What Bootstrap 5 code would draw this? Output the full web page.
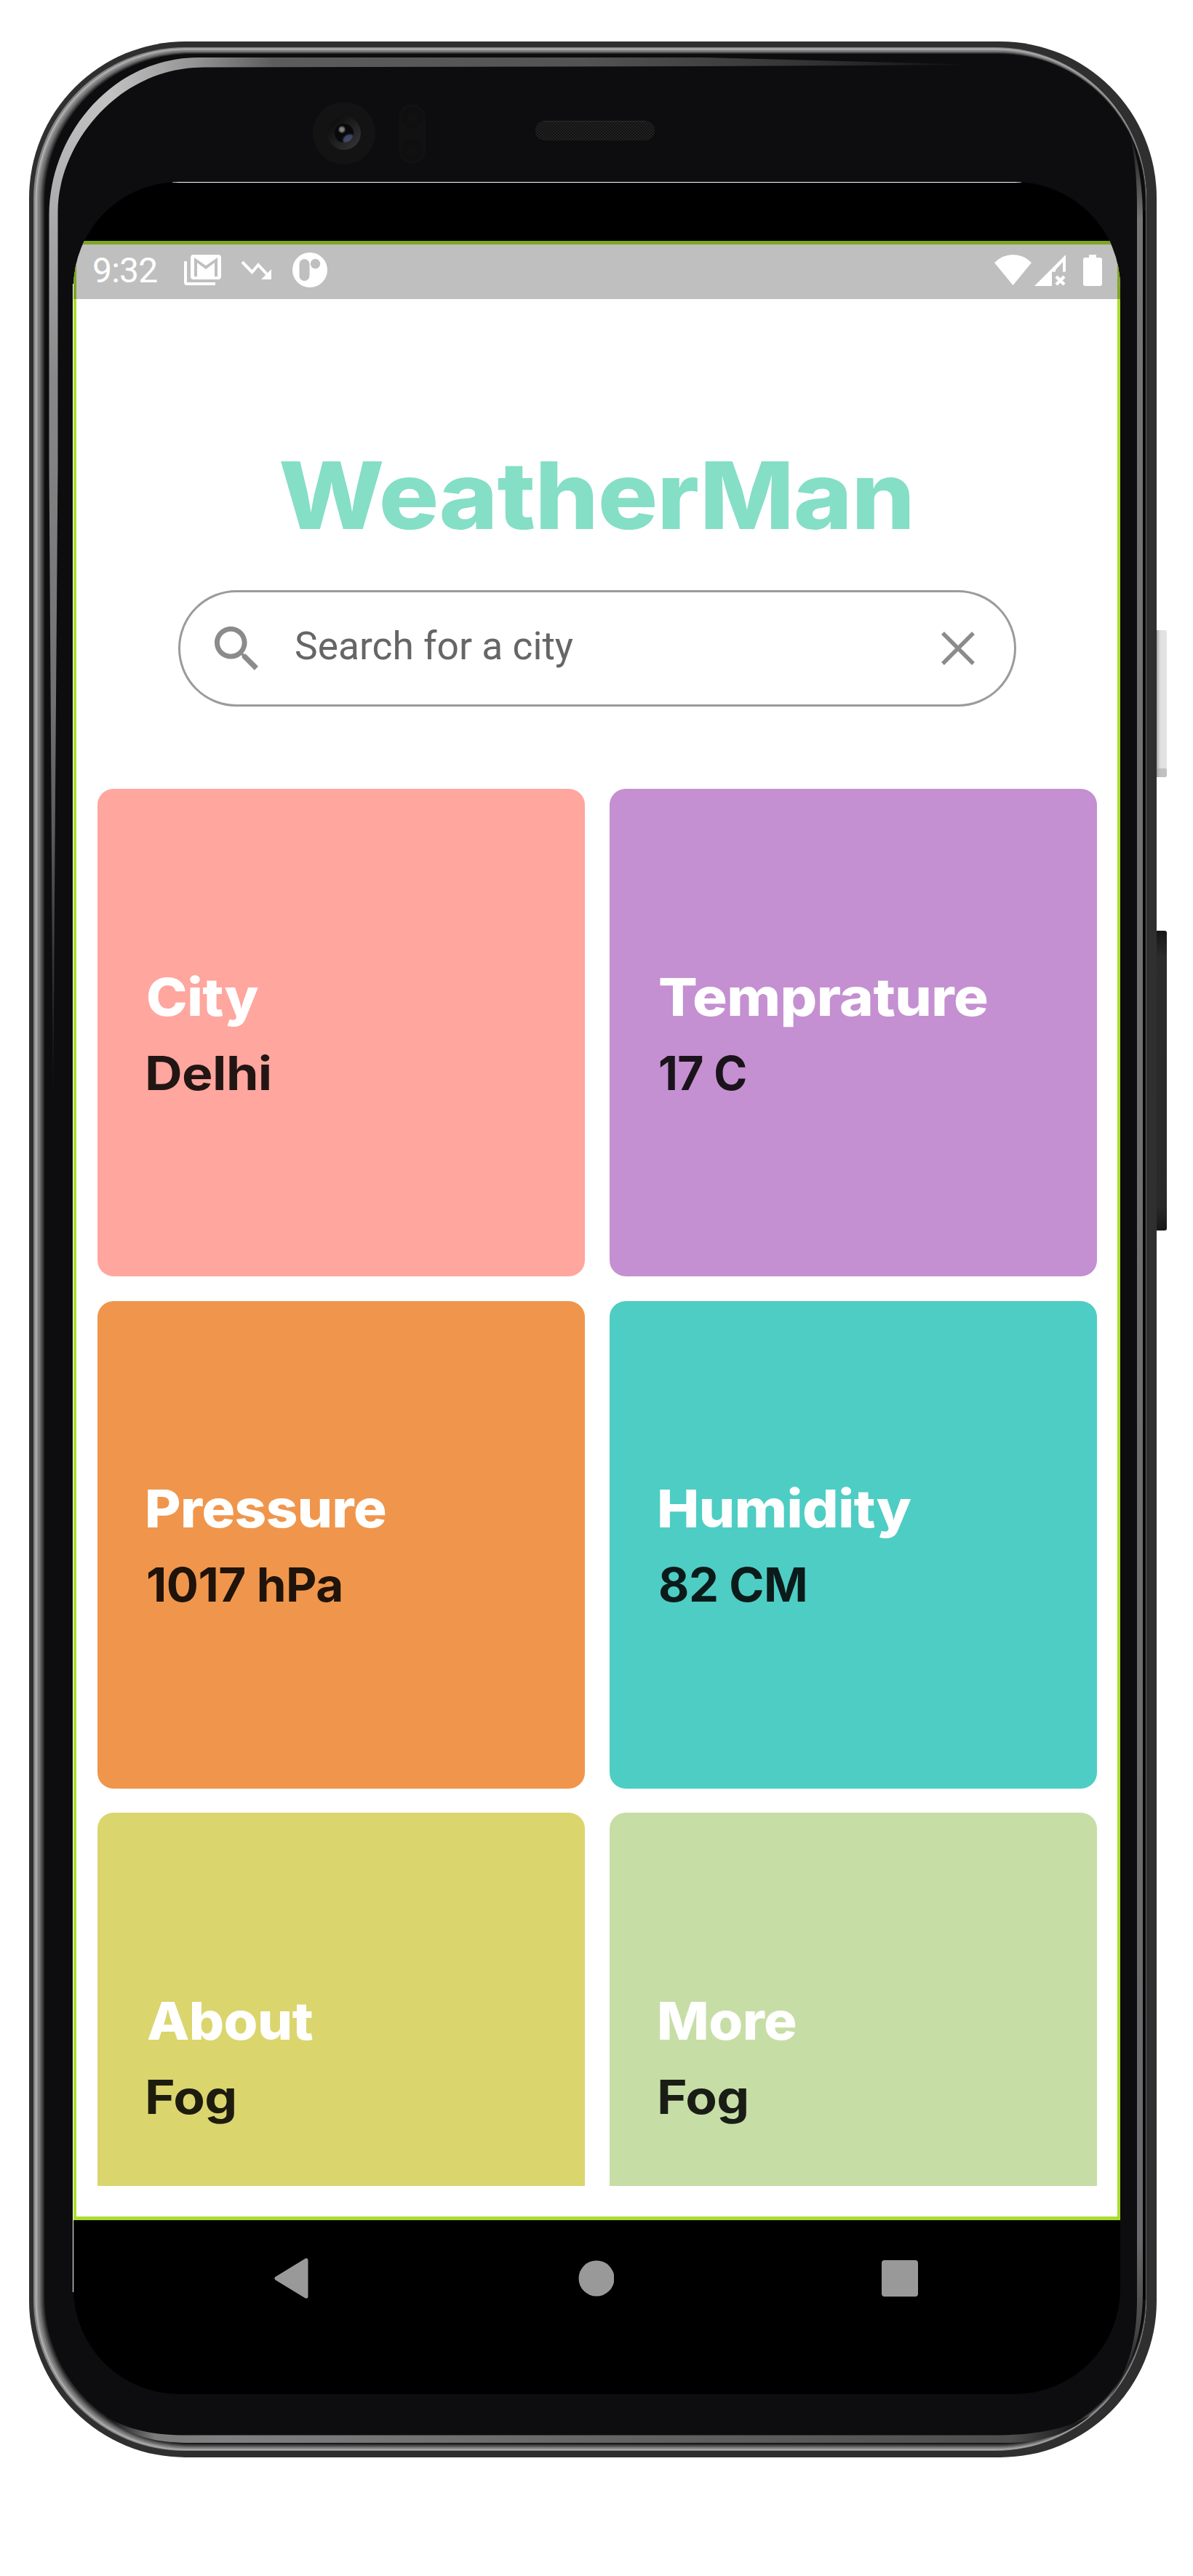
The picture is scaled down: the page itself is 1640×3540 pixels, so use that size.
<!DOCTYPE html>
<html lang="en">
<head>
<meta charset="utf-8">
<meta name="viewport" content="width=device-width, initial-scale=1">
<title>WeatherMan</title>
<link rel="stylesheet" href="https://cdn.jsdelivr.net/npm/bootstrap@5.3.0/dist/css/bootstrap.min.css">
<style>
body{background:#fff;font-family:Roboto,"Liberation Sans",sans-serif}
.device{width:1640px;height:3540px;padding:250px 100px 0 101px}
.shell{z-index:0}
.screen{z-index:1;width:1439px;height:3040px;padding-top:81px;border-radius:145px;background:#000}
.app{height:2720px;background:#fff;border:solid #abdc2e;border-width:5px 4px}
.status-bar{height:80px;margin:-5px -4px 0;padding:0 25px 0 26px;background:rgba(0,0,0,.25);color:#fff}
.clock{width:126px;font-size:48px;line-height:72px;letter-spacing:-.8px;padding-top:2px}
.brand-title{margin-top:190px;font:800 128px/160px Inter,"Open Sans",sans-serif;letter-spacing:-1px;color:#85dec6;padding-left:280px}
.search-pill{width:1152px;height:160px;margin-top:50px;margin-left:140px;border:3px solid #9b9b9b;border-radius:80px;padding:0 45px 0 38px}
.search-pill .hint{font-size:53px;line-height:60px;color:#666;margin-left:52px;margin-top:-7px}
.tiles{display:grid;grid-template-columns:670px 670px;grid-auto-rows:670px;gap:33.5px 34px;height:1920px;margin:113px 0 0 29px}
.tile{border-radius:22px;padding:0 69px;font-family:Inter,"Open Sans",sans-serif;font-weight:800;letter-spacing:-.5px}
.tile-label{font-size:72px;line-height:108px;color:#fff}
.tile-value{font-size:64px;line-height:96px;margin-top:3px;color:rgba(0,0,0,.87);font-weight:700}
.t-city{background:#ffa69e}.t-temp{background:#c490d1}.t-press{background:#ef964c}
.t-hum{background:#4ecdc4}.t-about{background:#dbd56e}.t-more{background:#c6dea6}
.nav-keys{height:160px;padding:0 278px 0 276px}
.fit{white-space:nowrap;display:inline-block;transform-origin:0 50%}
</style>
<script src="https://cdn.jsdelivr.net/npm/bootstrap@5.3.0/dist/js/bootstrap.bundle.min.js"></script>
</head>
<body>
<main class="device position-relative overflow-hidden">
  <svg class="shell position-absolute top-0 start-0" width="1640" height="3540" viewBox="0 0 1640 3540" aria-hidden="true">
    <defs>
      <linearGradient id="gTop" gradientUnits="userSpaceOnUse" x1="150" y1="0" x2="1343" y2="0"><stop offset="0" stop-color="#c2c2c2"/><stop offset=".1" stop-color="#929292"/><stop offset=".19" stop-color="#5c5c5c"/><stop offset=".55" stop-color="#535353"/><stop offset=".8" stop-color="#343434"/><stop offset="1" stop-color="#0d0d0f"/></linearGradient>
      <linearGradient id="gLeft" gradientUnits="userSpaceOnUse" x1="0" y1="130" x2="0" y2="1530"><stop offset="0" stop-color="#c2c2c2"/><stop offset=".14" stop-color="#a6a6a6"/><stop offset=".28" stop-color="#888"/><stop offset=".6" stop-color="#707070"/><stop offset=".72" stop-color="#5c5c5c"/><stop offset="1" stop-color="#0d0d0f"/></linearGradient>
      <linearGradient id="gBot" gradientUnits="userSpaceOnUse" x1="145" y1="0" x2="1500" y2="0"><stop offset="0" stop-color="#0d0d0f"/><stop offset=".05" stop-color="#7c7c7c"/><stop offset=".12" stop-color="#808082"/><stop offset=".55" stop-color="#626262"/><stop offset=".92" stop-color="#4e4e4e"/><stop offset="1" stop-color="#0d0d0f"/></linearGradient>
      <linearGradient id="gRight" gradientUnits="userSpaceOnUse" x1="0" y1="175" x2="0" y2="3300"><stop offset="0" stop-color="#0d0d0f"/><stop offset=".04" stop-color="#757575"/><stop offset=".93" stop-color="#6a6a6c"/><stop offset=".97" stop-color="#444"/><stop offset="1" stop-color="#0d0d0f"/></linearGradient>
      <linearGradient id="gPow" x1="0" x2="1" y1="0" y2="0"><stop offset=".28" stop-color="#9a9a9a"/><stop offset=".45" stop-color="#cfcfcf"/><stop offset=".6" stop-color="#e2e2e2"/></linearGradient>
      <linearGradient id="gVol" x1="0" x2="0" y1="0" y2="1"><stop offset="0" stop-color="#161616"/><stop offset=".09" stop-color="#2b2b2b"/><stop offset=".92" stop-color="#292929"/><stop offset="1" stop-color="#171717"/></linearGradient>
      <linearGradient id="gLens" x1="0" x2="1" y1="0" y2="1"><stop offset=".2" stop-color="#101011"/><stop offset="1" stop-color="#38383a"/></linearGradient>
      <radialGradient id="gGlint"><stop offset="0" stop-color="#8a8a8a"/><stop offset=".5" stop-color="#777"/><stop offset="1" stop-color="#777" stop-opacity="0"/></radialGradient>
      <radialGradient id="gBlue"><stop offset="0" stop-color="#454d6e"/><stop offset=".6" stop-color="#3c4361"/><stop offset="1" stop-color="#0d0d0f" stop-opacity="0"/></radialGradient>
      <radialGradient id="gDot"><stop offset="0" stop-color="#121213"/><stop offset="1" stop-color="#0e0e0e"/></radialGradient>
      <pattern id="mesh" width="4" height="4" patternUnits="userSpaceOnUse"><rect width="4" height="4" fill="#101011"/><path d="M0 0h2v2H0zM2 2h2v2H2z" fill="#232324"/></pattern>
      <clipPath id="cL"><rect width="150" height="1600"/></clipPath>
      <clipPath id="cR"><rect x="150" width="1300" height="800"/></clipPath>
      <clipPath id="cLens"><circle cx="473" cy="183" r="13"/></clipPath>
      <path id="sheen" d="M73 1530L70.500 1090L67.500 640V295C67.500 190 150 79 275 79H970L1343 89L970 91L280 92.500C160 93 80 200 79.500 290V640L76 1090Z"/>
    </defs>
    <!-- side keys -->
    <rect x="1584" y="866" width="20" height="202" rx="3" fill="url(#gPow)"/>
    <rect x="1589" y="1056" width="15" height="12" rx="2" fill="#999" opacity=".45"/>
    <rect x="1584" y="1279" width="20" height="412" rx="3" fill="url(#gVol)"/>
    <!-- body and bevel -->
    <rect x="40" y="57" width="1550" height="3320" rx="215" fill="#2f2f2f"/>
    <rect x="46" y="65" width="1530" height="3303" rx="208" fill="#858585"/>
    <rect x="48.500" y="66.500" width="1527" height="3300.500" rx="207" fill="#b2b2b2"/>
    <rect x="50.500" y="68" width="1525.300" height="3298" rx="206" fill="#959595"/>
    <rect x="52.500" y="69.500" width="1523.300" height="3295" rx="205" fill="#7b7b7b"/>
    <rect x="55" y="71" width="1520.500" height="3292" rx="204" fill="#626262"/>
    <rect x="57" y="72" width="1518.300" height="3289.500" rx="203" fill="#454545"/>
    <rect x="59" y="73" width="1516" height="3287" rx="202" fill="#2a2a2b"/>
    <rect x="61" y="74" width="1513.500" height="3284" rx="201" fill="#0d0d0f"/>
    <path d="M1573 290V3160" stroke="#000" stroke-width="3"/>
    <use href="#sheen" fill="url(#gLeft)" clip-path="url(#cL)"/>
    <use href="#sheen" fill="url(#gTop)" clip-path="url(#cR)"/>
    <path fill="url(#gRight)" d="M1550 175C1562 210 1563 260 1563 290V3160C1563 3220 1550 3260 1522 3300C1560 3250 1571 3200 1571 3150V300C1571 250 1563 210 1550 175Z"/>
    <path fill="url(#gBot)" d="M145 3320C175 3340 215 3346.500 255 3346.500H1375C1430 3346 1475 3335 1500 3318C1465 3350 1420 3357 1380 3357H260C215 3357 175 3348 145 3320Z"/>
    <!-- front camera, sensor, speaker -->
    <circle cx="473" cy="183" r="43" fill="#131313"/>
    <circle cx="473" cy="183" r="23" fill="url(#gLens)"/>
    <circle cx="473" cy="183" r="13" fill="#09090a"/>
    <g clip-path="url(#cLens)"><ellipse cx="479" cy="191" rx="11" ry="8" transform="rotate(-30 479 191)" fill="url(#gBlue)"/></g>
    <circle cx="470" cy="178" r="5.500" fill="url(#gGlint)"/>
    <rect x="548" y="143" width="37" height="82" rx="18.500" fill="#111112"/>
    <circle cx="566.500" cy="161.500" r="14.500" fill="url(#gDot)"/><circle cx="566.500" cy="206.500" r="14.500" fill="url(#gDot)"/>
    <rect x="736" y="166" width="164" height="27" rx="13" fill="url(#mesh)"/><path d="M748 166.500H888" stroke="#2b2b2c"/>
    <path d="M100.500 390V3150" stroke="#fff" stroke-width="1"/>
  </svg>

  <div class="screen position-relative overflow-hidden">
    <svg class="position-absolute top-0 start-0" width="1439" height="2" aria-hidden="true"><path d="M136 .5H1303" stroke="#fff"/></svg>
    <div class="app">
      <header class="status-bar d-flex align-items-center">
        <span class="clock">9:32</span>
        <svg width="51" height="42" viewBox="0 0 51 42"><path d="M2 9V38Q2 40 4 40H43" fill="none" stroke="#fff" stroke-width="4"/><path fill="#fff" fill-rule="evenodd" d="M13 0H47Q51 0 51 4V30Q51 34 47 34H13Q9 34 9 30V4Q9 0 13 0ZM14 4V30H18V11L30 20L42 11V30H46V4L30 15Z"/></svg>
        <svg style="margin-left:27px" width="42" height="26" viewBox="0 0 42 26"><path d="M2 2L15.500 16L24 6L37 20" fill="none" stroke="#fff" stroke-width="4"/><path d="M42 12V26H28Z" fill="#fff"/></svg>
        <svg style="margin-left:29px" width="48" height="48" viewBox="0 0 48 48"><circle cx="24" cy="24" r="24" fill="#fff"/><rect x="9.500" y="9" width="14" height="30" rx="7" fill="#bfbfbf"/><circle cx="31.500" cy="15.500" r="6.700" fill="#bfbfbf"/></svg>
        <svg class="ms-auto" width="51" height="42" viewBox="0 0 51 42"><path d="M25.500 42L0 11Q11 0 25.500 0T51 11Z" fill="#fff"/></svg>
        <svg style="margin-left:4px" width="43" height="43" viewBox="0 0 43 43"><path fill="#fff" fill-rule="evenodd" d="M0 43L43 0V23.500H39V10L29 21V23.500H24V43Z"/><path d="M30 30L41 41M41 30L30 41" stroke="#fff" stroke-width="4.500"/></svg>
        <svg style="margin-left:24px" width="26" height="43" viewBox="0 0 26 43"><path d="M8 0H18V4H23Q26 4 26 7V40Q26 43 23 43H3Q0 43 0 40V7Q0 4 3 4H8Z" fill="#fff"/></svg>
      </header>

      <h1 class="brand-title mb-0"><span class="fit" data-ink="866">WeatherMan</span></h1>

      <div class="search-pill d-flex align-items-center" role="search">
        <svg style="margin-left:9px" width="60" height="60" viewBox="3 3 17.500 17.500"><path fill="#8b8b8b" d="M15.500 14h-.79l-.28-.27C15.410 12.590 16 11.110 16 9.500 16 5.910 13.090 3 9.500 3S3 5.910 3 9.500 5.910 16 9.500 16c1.610 0 3.090-.59 4.230-1.570l.27.28v.79l5 4.990L20.490 19l-4.990-5zm-6 0C7.010 14 5 11.990 5 9.500S7.010 5 9.500 5 14 7.010 14 9.500 11.990 14 9.500 14z"/></svg>
        <span class="hint flex-grow-1"><span class="fit" data-ink="381">Search for a city</span></span>
        <svg style="margin-right:9px" width="46" height="46" viewBox="0 0 46 46"><path d="M2 2L44 44M44 2L2 44" stroke="#8b8b8b" stroke-width="5.500"/></svg>
      </div>

      <section class="tiles overflow-hidden">
        <article class="tile t-city d-flex flex-column justify-content-center align-items-start"><div class="tile-label fit" data-ink="152">City</div><div class="tile-value fit" data-ink="167">Delhi</div></article>
        <article class="tile t-temp d-flex flex-column justify-content-center align-items-start"><div class="tile-label fit" data-ink="449">Temprature</div><div class="tile-value fit" data-ink="118">17 C</div></article>
        <article class="tile t-press d-flex flex-column justify-content-center align-items-start"><div class="tile-label fit" data-ink="326">Pressure</div><div class="tile-value fit" data-ink="266">1017 hPa</div></article>
        <article class="tile t-hum d-flex flex-column justify-content-center align-items-start"><div class="tile-label fit" data-ink="345">Humidity</div><div class="tile-value fit" data-ink="200">82 CM</div></article>
        <article class="tile t-about d-flex flex-column justify-content-center align-items-start"><div class="tile-label fit" data-ink="227">About</div><div class="tile-value fit" data-ink="119">Fog</div></article>
        <article class="tile t-more d-flex flex-column justify-content-center align-items-start"><div class="tile-label fit" data-ink="186">More</div><div class="tile-value fit" data-ink="119">Fog</div></article>
      </section>
    </div>
    <nav class="nav-keys d-flex align-items-center justify-content-between">
      <svg width="47" height="56" viewBox="0 0 47 56"><path d="M3 28L44 3V53Z" fill="#999" stroke="#999" stroke-width="5" stroke-linejoin="round"/></svg>
      <svg width="52" height="50" viewBox="0 0 52 50"><circle cx="28" cy="25" r="24.500" fill="#999"/></svg>
      <svg width="50" height="50" viewBox="0 0 50 50"><rect width="50" height="50" rx="4" fill="#999"/></svg>
    </nav>
  </div>
</main>
<script>
// Widens each line so its inked width equals data-ink, and removes the left side bearing.
const ctx = document.createElement('canvas').getContext('2d');
document.querySelectorAll('.fit').forEach(el => {
  const s = getComputedStyle(el), t = el.textContent;
  ctx.font = `${s.fontWeight} ${s.fontSize} ${s.fontFamily}`;
  const m = ctx.measureText(t), ls = parseFloat(s.letterSpacing) || 0;
  const k = el.dataset.ink / (m.actualBoundingBoxRight + m.actualBoundingBoxLeft + ls * (t.length - 1));
  el.style.transform = `scaleX(${k})`;
  el.style.marginLeft = m.actualBoundingBoxLeft * k + 'px';
});
</script>
</body>
</html>
